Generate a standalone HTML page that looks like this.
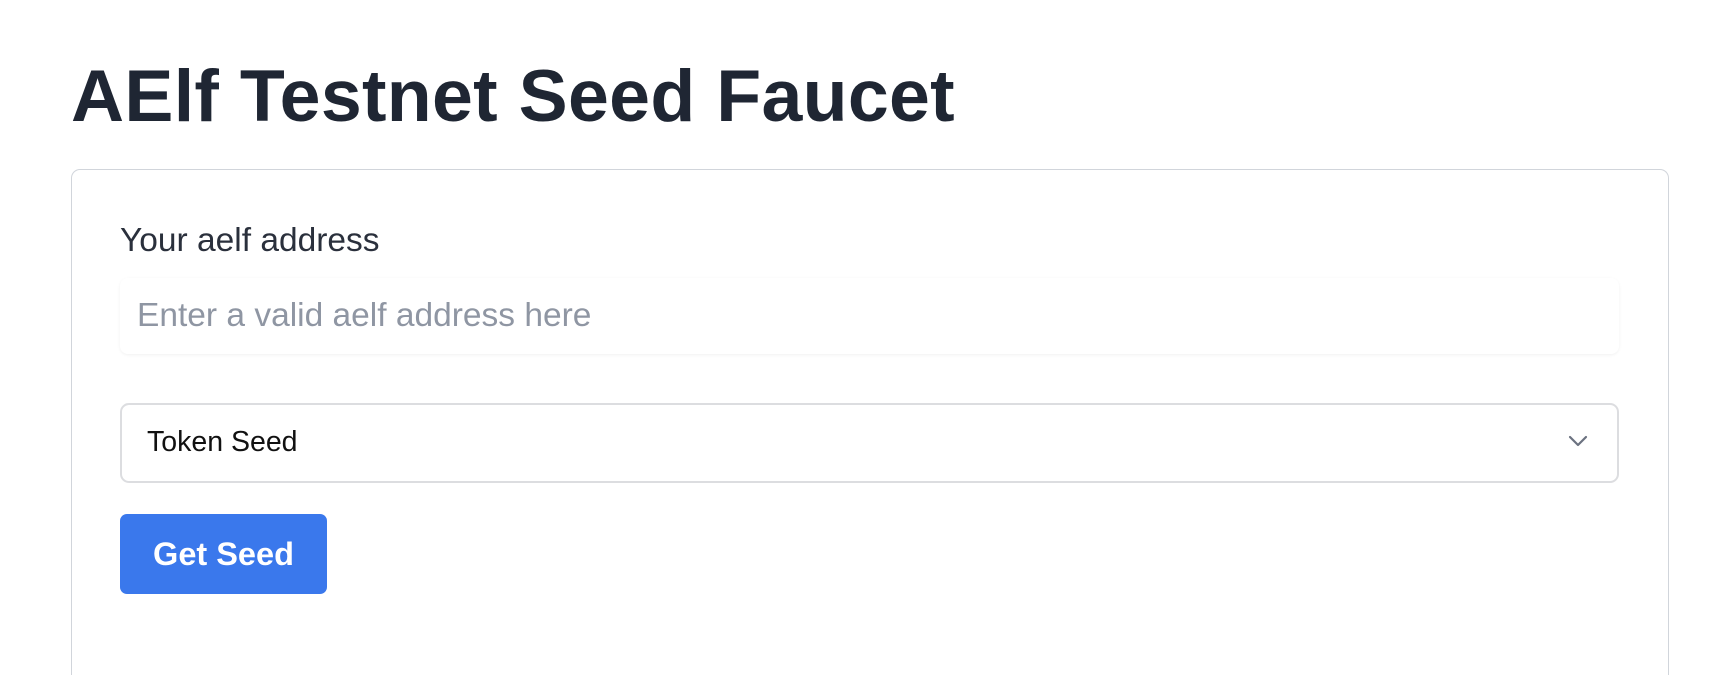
<!DOCTYPE html>
<html><head><meta charset="utf-8"><style>
html,body{margin:0;padding:0;background:#fff;font-family:"Liberation Sans",sans-serif;}
#wrap{position:relative;width:1730px;height:676px;overflow:hidden;}
h1{position:absolute;left:71px;top:56px;margin:0;font-size:73.5px;font-weight:bold;color:#1f2633;line-height:80px;letter-spacing:0.3px;}
.card{position:absolute;left:71px;top:169px;width:1596px;height:505px;border:1.5px solid #d1d5db;border-bottom:none;border-radius:9px 9px 0 0;}
.label{position:absolute;left:120px;top:221px;font-size:33.5px;color:#2a303c;line-height:40px;}
.input{position:absolute;left:120px;top:278px;width:1499px;height:76px;border-radius:8px;box-shadow:0 1px 3px rgba(0,0,0,0.06);}
.ph{position:absolute;left:137px;top:294px;font-size:33.5px;color:#8f96a3;line-height:44px;}
.select{position:absolute;left:120px;top:403px;width:1495px;height:76px;border:2px solid #dcdde0;border-radius:9px;}
.sel{position:absolute;left:147px;top:424px;font-size:28.5px;color:#111;line-height:36px;}
.btn{position:absolute;left:120px;top:514px;width:207px;height:80px;background:#3a78ec;border-radius:7px;color:#fff;font-weight:bold;font-size:32.5px;line-height:80px;text-align:center;}
</style></head><body><div id="wrap">
<h1>AElf Testnet Seed Faucet</h1>
<div class="card"></div>
<div class="label">Your aelf address</div>
<div class="input"></div>
<div class="ph">Enter a valid aelf address here</div>
<div class="select"></div>
<div class="sel">Token Seed</div>
<svg style="position:absolute;left:1568px;top:434px" width="20" height="14" viewBox="0 0 20 14"><path d="M2 3 L10 11 L18 3" fill="none" stroke="#6b7280" stroke-width="2.2" stroke-linecap="round" stroke-linejoin="round"/></svg>
<div class="btn">Get Seed</div>
</div></body></html>
